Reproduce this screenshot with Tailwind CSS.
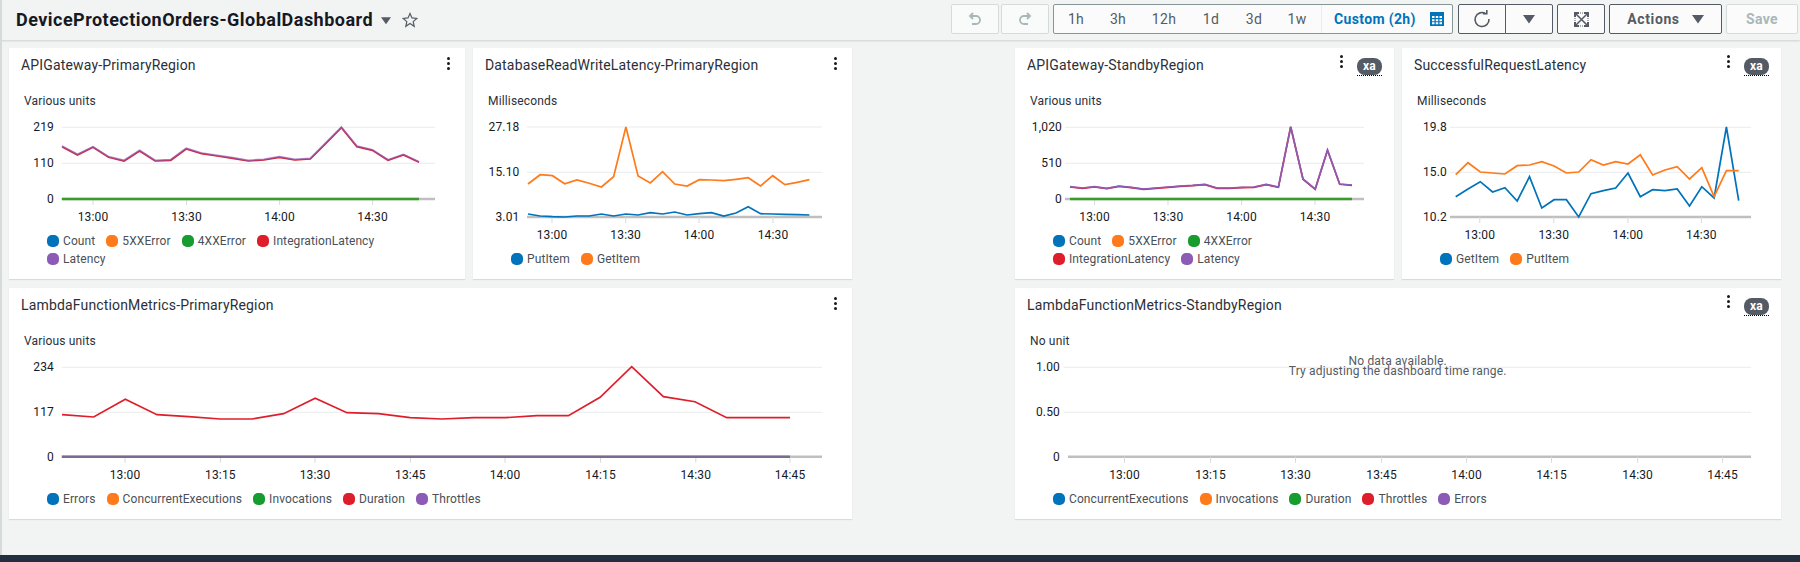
<!DOCTYPE html>
<html lang="en">
<head>
    <meta charset="UTF-8">
    <title>DeviceProtectionOrders-GlobalDashboard</title>
    <script src="https://cdn.jsdelivr.net/npm/@tailwindcss/browser@4"></script>
</head>
<body class="bg-[#f2f3f3] h-[562px] overflow-hidden flex flex-col font-['Roboto','Noto_Sans',sans-serif] text-[#16191f] tracking-[0.16px]">

    <!-- toolbar -->
    <header class="h-[40px] shrink-0 flex items-center shadow-[0_1px_2px_rgba(0,0,0,0.15)] border-l-2 border-[#d5dbdb]">
        <h1 class="ml-[14px] text-[18px] font-bold leading-none whitespace-nowrap tracking-[0.47px]">DeviceProtectionOrders-GlobalDashboard</h1>
        <svg class="ml-[8px] mt-[1px]" width="10" height="9" viewBox="0 0 12 10"><path d="M0 1h12L6 9.500z" fill="#545b64"/></svg>
        <svg class="ml-[11px]" width="16" height="16" viewBox="0 0 16 16"><path d="M8 1.500l2 4.400 4.800.5-3.600 3.200 1 4.700L8 11.400l-4.200 2.900 1-4.700L1.200 6.400 6 5.900z" fill="none" stroke="#545b64" stroke-width="1.200"/></svg>

        <div class="ml-auto mt-[-2px] flex items-center h-[30px] text-[14px]">
            <button class="w-[48px] h-full bg-[#f9fafa] border border-[#d5dbdb] rounded-[2px] flex items-center justify-center">
                <svg width="16" height="16" viewBox="0 0 16 16" fill="none" stroke="#aab7b8" stroke-width="1.800"><path d="M6 2L3 5l3 3M3 5h6a4 4 0 0 1 0 8H5"/></svg>
            </button>
            <button class="ml-[2px] w-[48px] h-full bg-[#f9fafa] border border-[#d5dbdb] rounded-[2px] flex items-center justify-center">
                <svg width="16" height="16" viewBox="0 0 16 16" fill="none" stroke="#aab7b8" stroke-width="1.800"><path d="M10 2l3 3-3 3M13 5H7a4 4 0 0 0 0 8h4"/></svg>
            </button>
            <div class="ml-[4px] w-[400px] h-full bg-[#fbfbfb] border border-[#879596] rounded-[2px] flex items-center">
                <div class="w-[267px] h-full flex items-center text-[#545b64] tracking-[0.3px]">
                    <span class="w-[42px] text-center ml-[1px]">1h</span>
                    <span class="w-[42px] text-center">3h</span>
                    <span class="w-[50px] text-center">12h</span>
                    <span class="w-[44px] text-center">1d</span>
                    <span class="w-[42px] text-center">3d</span>
                    <span class="w-[44px] text-center">1w</span>
                </div>
                <div class="h-full flex-1 border-l border-[#eaeded] flex items-center pl-[12px]">
                    <span class="w-[82px] font-bold text-[#0073bb] whitespace-nowrap tracking-[0.35px]">Custom (2h)</span>
                    <svg class="ml-[14px]" width="14" height="14" viewBox="0 0 14 14"><rect width="14" height="14" fill="#0073bb"/><path d="M2 4h2.500v2H2zM5.750 4h2.500v2h-2.500zM9.500 4H12v2H9.500zM2 7.200h2.500v2H2zM5.750 7.200h2.500v2h-2.500zM9.500 7.200H12v2H9.500zM2 10.300h2.500v2H2zM5.750 10.300h2.500v2h-2.500zM9.500 10.300H12v2H9.500z" fill="#fff"/></svg>
                </div>
            </div>
            <button class="ml-[5px] w-[48px] h-full bg-[#fbfbfb] border border-[#545b64] rounded-l-[2px] flex items-center justify-center">
                <svg width="18" height="18" viewBox="0 0 18 18" fill="none" stroke="#545b64" stroke-width="1.600"><path d="M13 3.800A7 7 0 1 0 16 9"/><path d="M9.800 3.800h4V0" /></svg>
            </button>
            <button class="ml-[-1px] w-[48px] h-full bg-[#fbfbfb] border border-[#545b64] rounded-r-[2px] flex items-center justify-center">
                <svg width="12" height="10" viewBox="0 0 12 10"><path d="M0 1h12L6 9.500z" fill="#545b64"/></svg>
            </button>
            <button class="ml-[4px] w-[48px] h-full bg-[#fbfbfb] border border-[#545b64] rounded-[2px] flex items-center justify-center">
                <svg width="15" height="15" viewBox="0 0 15 15" fill="none" stroke="#545b64"><path stroke-width="2" d="M1 5V1h4M10 1h4v4M14 10v4h-4M5 14H1v-4"/><path stroke-width="1.500" d="M2 2l11 11M13 2L2 13"/><path stroke-width="1" d="M6 1h3M6 14h3M1 6v3M14 6v3" stroke-dasharray="1 1"/></svg>
            </button>
            <button class="ml-[4px] w-[113px] h-full bg-[#fbfbfb] border border-[#545b64] rounded-[2px] flex items-center justify-center gap-[12px] font-bold text-[#545b64] tracking-[0.6px]">
                Actions
                <svg width="12" height="10" viewBox="0 0 12 10"><path d="M0 1h12L6 9.500z" fill="#545b64"/></svg>
            </button>
            <button class="ml-[4px] mr-[2px] w-[72px] h-full bg-[#fbfbfb] border border-[#d5dbdb] rounded-[2px] font-bold text-[#aab7b8] tracking-[0.3px]">Save</button>
        </div>
    </header>

    <!-- widgets -->
    <main class="flex-1 flex pl-[7px] pt-[8px] border-l-2 border-[#d5dbdb]">
        <div class="w-[843px] flex flex-col gap-[9px]">
            <div class="flex gap-[8px]">
                <section data-chart="gw1" class="w-[456px] h-[231px] bg-white shadow-[0_1px_1px_rgba(0,0,0,0.1)]"></section>
                <section data-chart="db" class="w-[379px] h-[231px] bg-white shadow-[0_1px_1px_rgba(0,0,0,0.1)]"></section>
            </div>
            <section data-chart="fn1" class="w-[843px] h-[231px] bg-white shadow-[0_1px_1px_rgba(0,0,0,0.1)]"></section>
        </div>
        <div class="ml-[163px] w-[766px] flex flex-col gap-[9px]">
            <div class="flex gap-[8px]">
                <section data-chart="gw2" class="w-[379px] h-[231px] bg-white shadow-[0_1px_1px_rgba(0,0,0,0.1)]"></section>
                <section data-chart="req" class="w-[379px] h-[231px] bg-white shadow-[0_1px_1px_rgba(0,0,0,0.1)]"></section>
            </div>
            <section data-chart="fn2" class="w-[766px] h-[231px] bg-white shadow-[0_1px_1px_rgba(0,0,0,0.1)]"></section>
        </div>
    </main>

    <footer class="h-[7px] shrink-0 bg-[#232f3e]"></footer>

    <script>
        const C = { blue: '#0073bb', orange: '#ff7a1a', green: '#169c2f', red: '#df1e2b', purple: '#8c5bb5' };
        const gw = { Count: C.blue, '5XXError': C.orange, '4XXError': C.green, IntegrationLatency: C.red, Latency: C.purple };

        // y values are screen coordinates, taken off the reference
        const scr = (arr, base = 0) => arr.map(v => base + v / 3);

        const latency1 = [438,463,440,470,481,451,481,479,445,459,466,473,481,478,470,478,475,428,381,438,449,479,463,485];
        const latency2 = [560,564,560,565,558,562,567,564,561,558,556,553,564,564,562,561,553,561,380,537,567,450,552,555];
        const duration = [404,411,358,404,410,417,417,401,355,398,401,413,417,413,413,407,407,352,260,350,365,413,413,413];

        const charts = {
            gw1: {
                title: 'APIGateway-PrimaryRegion', unit: 'Various units', left: 9, width: 456, top: 48, right: 435, gridL: 61.5, labelX: 54,
                grid: [[127.300, '219'], [163.300, '110'], [199, '0']], legend: gw, legendH: 36,
                ticks: [[93, '13:00'], [186.600, '13:30'], [279.600, '14:00'], [372.600, '14:30']],
                x0: 62, x1: 419,
                lines: [
                    [C.red, scr(latency1.map(v => v + 2))],
                    [C.purple, scr(latency1), 0.7],
                ],
                flat: [['#3d9a2e', 199]],
            },
            db: {
                title: 'DatabaseReadWriteLatency-PrimaryRegion', unit: 'Milliseconds', left: 473, width: 379, top: 48, right: 822, gridL: 527, labelX: 519.500,
                grid: [[127, '27.18'], [172.300, '15.10'], [217, '3.01']], legend: { PutItem: C.blue, GetItem: C.orange }, legendH: 18,
                ticks: [[552, '13:00'], [625.700, '13:30'], [699, '14:00'], [773, '14:30']],
                x0: 528, x1: 809.400,
                lines: [
                    [C.orange, scr([552,524,527,551,540,550,561,530,381,528,549,515,552,558,539,540,542,538,533,558,527,554,547,539])],
                    [C.blue, scr([642,648,650,651,648,648,642,648,642,645,638,642,636,645,641,638,648,639,620,641,642,643,644,645])],
                ],
            },
            gw2: {
                title: 'APIGateway-StandbyRegion', unit: 'Various units', left: 1015, width: 379, top: 48, right: 1364, gridL: 1065, labelX: 1062, badge: true,
                grid: [[127.300, '1,020'], [163.300, '510'], [199, '0']], legend: gw, legendH: 36,
                ticks: [[1094.600, '13:00'], [1168, '13:30'], [1241.600, '14:00'], [1315, '14:30']],
                x0: 1070, x1: 1352,
                lines: [
                    [C.red, scr(latency2.map(v => v + 1))],
                    [C.purple, scr(latency2)],
                ],
                flat: [['#3d9a2e', 199]],
            },
            req: {
                title: 'SuccessfulRequestLatency', unit: 'Milliseconds', left: 1402, width: 379, top: 48, right: 1751, gridL: 1450, labelX: 1447, badge: true,
                grid: [[127.300, '19.8'], [172.300, '15.0'], [217, '10.2']], legend: { GetItem: C.blue, PutItem: C.orange }, legendH: 18,
                ticks: [[1479.800, '13:00'], [1553.800, '13:30'], [1627.900, '14:00'], [1701.400, '14:30']],
                x0: 1455.700, x1: 1738.700,
                lines: [
                    [C.blue, scr([590,567,545,576,563,603,530,624,599,599,651,581,572,564,519,590,569,572,567,618,560,594,381,602])],
                    [C.orange, scr([524,488,516,519,522,497,495,485,498,519,516,479,495,485,492,464,525,510,500,537,503,590,512,512])],
                ],
            },
            fn1: {
                title: 'LambdaFunctionMetrics-PrimaryRegion', unit: 'Various units', left: 9, width: 843, top: 288, right: 822, gridL: 61.500, labelX: 54,
                grid: [[367.300, '234'], [412.300, '117'], [456.700, '0']],
                legend: { Errors: C.blue, ConcurrentExecutions: C.orange, Invocations: C.green, Duration: C.red, Throttles: C.purple }, legendH: 18,
                ticks: [[125, '13:00'], [220.400, '13:15'], [315, '13:30'], [410.400, '13:45'], [505, '14:00'], [600.500, '14:15'], [695.800, '14:30'], [790, '14:45']],
                x0: 62, x1: 790,
                lines: [[C.red, scr(duration, 280)]],
                flat: [['#7d6b8f', 456.700]],
            },
            fn2: {
                title: 'LambdaFunctionMetrics-StandbyRegion', unit: 'No unit', left: 1015, width: 766, top: 288, right: 1751, gridL: 1063.600, labelX: 1060, badge: true, axisL: 1068, empty: true,
                grid: [[367.300, '1.00'], [412.300, '0.50'], [456.700, '0']],
                legend: { ConcurrentExecutions: C.blue, Invocations: C.orange, Duration: C.green, Throttles: C.red, Errors: C.purple }, legendH: 18,
                ticks: [[1124.500, '13:00'], [1210.600, '13:15'], [1295.500, '13:30'], [1381.600, '13:45'], [1466.600, '14:00'], [1551.500, '14:15'], [1637.700, '14:30'], [1722.600, '14:45']],
            },
        };

        function chartSvg(c) {
            const top = c.top + 64;
            const h = 231 - 64 - 11 - c.legendH;
            const axis = c.grid[c.grid.length - 1][0];
            let s = `<svg class="block" width="${c.width}" height="${h}" viewBox="${c.left} ${top} ${c.width} ${h}" font-size="12" fill="#16191f">`;
            c.grid.forEach(([y, label], i) => {
                const last = i === c.grid.length - 1;
                s += last
                    ? `<line x1="${c.axisL || c.gridL}" x2="${c.right}" y1="${y}" y2="${y}" stroke="#bfbfbf" stroke-width="2.500"/>`
                    : `<line x1="${c.gridL}" x2="${c.right}" y1="${y}" y2="${y}" stroke="#e9ebed"/>`;
                s += `<text x="${c.labelX}" y="${y + 4}" text-anchor="end">${label}</text>`;
            });
            c.ticks.forEach(([x, label]) => {
                s += `<line x1="${x}" x2="${x}" y1="${axis}" y2="${axis + 6}" stroke="#d5dbdb"/>`;
                s += `<text x="${x}" y="${axis + 22}" text-anchor="middle">${label}</text>`;
            });
            (c.flat || []).forEach(([color, y]) => {
                s += `<line x1="${c.x0}" x2="${c.x1}" y1="${y}" y2="${y}" stroke="${color}" stroke-width="2.500"/>`;
            });
            (c.lines || []).forEach(([color, ys, alpha]) => {
                const dx = (c.x1 - c.x0) / (ys.length - 1);
                const pts = ys.map((y, i) => `${(c.x0 + i * dx).toFixed(1)},${y.toFixed(1)}`).join(' ');
                s += `<polyline points="${pts}" fill="none" stroke="${color}" stroke-width="1.700" opacity="${alpha || 1}"/>`;
            });
            if (c.empty) {
                const mid = 1397.700;
                s += `<text x="${mid}" y="365" text-anchor="middle" fill="#545b64">No data available.</text>`;
                s += `<text x="${mid}" y="375" text-anchor="middle" fill="#545b64">Try adjusting the dashboard time range.</text>`;
            }
            return s + '</svg>';
        }

        document.querySelectorAll('[data-chart]').forEach(el => {
            const c = charts[el.dataset.chart];
            const legend = Object.entries(c.legend).map(([name, color]) =>
                `<span class="flex items-center h-[18px] mr-[11px] whitespace-nowrap"><i class="w-[12px] h-[12px] rounded-[5px] mr-[4px]" style="background:${color}"></i>${name}</span>`).join('');
            el.innerHTML = `
                <div class="h-[33px] flex items-center px-[12px]">
                    <h2 class="text-[14px] text-[#2b3038] whitespace-nowrap mt-[1px]">${c.title}</h2>
                    <div class="ml-auto flex items-center">
                        <span class="flex flex-col gap-[2px] mt-[-2px] ${c.badge ? 'mr-[14px] mb-[4px]' : 'mr-[3px]'}"><i class="w-[3px] h-[3px] bg-[#16191f] rounded-full"></i><i class="w-[3px] h-[3px] bg-[#16191f] rounded-full"></i><i class="w-[3px] h-[3px] bg-[#16191f] rounded-full"></i></span>
                        ${c.badge ? '<span class="w-[25px] h-[18px] mt-[4px] border-b border-dotted border-black"><span class="block h-[17px] rounded-[8px] bg-[#545b64] text-white text-[12px] font-bold leading-[17px] text-center">xa</span></span>' : ''}
                    </div>
                </div>
                <div class="h-[31px] pt-[11px] pl-[15px] text-[12px] leading-[18px] text-[#2b3038]">${c.unit}</div>
                ${chartSvg(c)}
                <div class="ml-[38px] flex flex-wrap text-[12px] text-[#4a5058] tracking-[0.1px]" style="width:${c.right - c.left - 38}px">${legend}</div>`;
        });
    </script>
</body>
</html>
